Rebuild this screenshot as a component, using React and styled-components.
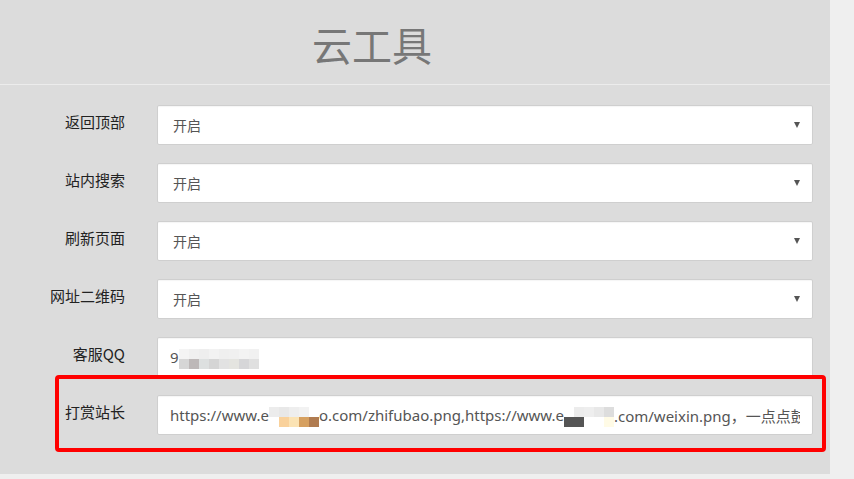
import React from "react";
import styled, { createGlobalStyle } from "styled-components";

const Global = createGlobalStyle`
  html, body {
    margin: 0;
    padding: 0;
    background: #efefef;
    font-family: "Noto Sans", "Noto Sans CJK SC", sans-serif;
  }
`;

const rows = [
  { label: "返回顶部", value: "开启" },
  { label: "站内搜索", value: "开启" },
  { label: "刷新页面", value: "开启" },
  { label: "网址二维码", value: "开启" },
];

const qqBlur = [
  ["#f4f4f4", "#f0f0f0", "#eeeeee", "#f2f2f2", "#efefef", "#f0f0f0", "#f3f3f3", "#f1f1f1"],
  ["#d6d6d6", "#bdb8b8", "#dde0e0", "#d5d5d5", "#e2e2e2", "#e4e4e0", "#d6d6d8", "#e0e0e0"],
];

const payBlur1 = [
  ["#ececec", "#e8e8e8", "#eeeeee", "#f2f2f2", "#ffffff"],
  ["#ffffff", "#f9d19b", "#fbe3b4", "#d6a060", "#b07b50"],
];

const payBlur2 = [
  ["#ffffff", "#ececec", "#eeeeee", "#e8e8e8", "#dddddd"],
  ["#555555", "#555555", "#ffffff", "#ffffff", "#fffbe6"],
];

const Blur = ({ cells }) => (
  <BlurBox>
    {cells.map((row, i) => (
      <BlurRow key={i}>
        {row.map((c, j) => (
          <BlurCell key={j} $color={c} />
        ))}
      </BlurRow>
    ))}
  </BlurBox>
);

const App = () => {
  return (
    <>
      <Global />
      <Panel>
        <Header>
          <Title>云工具</Title>
        </Header>
        <Form>
          {rows.map((r) => (
            <Row key={r.label}>
              <Label>{r.label}</Label>
              <Control>
                <span>{r.value}</span>
                <Caret />
              </Control>
            </Row>
          ))}
          <Row>
            <Label>客服QQ</Label>
            <Control $text>
              <Text>
                9
                <Blur cells={qqBlur} />
              </Text>
            </Control>
          </Row>
          <Row>
            <Label>打赏站长</Label>
            <Control $text>
              <Text>
                https://www.e
                <Blur cells={payBlur1} />
                o.com/zhifubao.png,https://www.e
                <Blur cells={payBlur2} />
                .com/weixin.png，一点点鼓励，都是对我莫大的支持
              </Text>
            </Control>
            <Highlight />
          </Row>
        </Form>
      </Panel>
    </>
  );
};

export default App;

const Panel = styled.div`
  width: 830px;
  background-color: #dcdcdc;
`;

const Header = styled.div`
  height: 85px;
  border-bottom: 1px solid #ececec;
  display: flex;
  align-items: center;
  padding: 4px 0 0 312px;
  box-sizing: border-box;
`;

const Title = styled.h1`
  margin: 0;
  font-size: 40px;
  font-weight: 400;
  color: #777;
  font-family: "Noto Sans CJK SC", sans-serif;
`;

const Form = styled.div`
  display: flex;
  flex-direction: column;
  gap: 18px;
  padding: 20px 17px 39px 0;
`;

const Row = styled.div`
  position: relative;
  display: grid;
  grid-template-columns: 125px 656px;
  column-gap: 32px;
  align-items: start;
`;

const Label = styled.div`
  text-align: right;
  font-size: 15px;
  color: #222;
  padding-top: 5px;
  line-height: 24px;
  font-family: "Noto Sans CJK SC", sans-serif;
`;

const Control = styled.div`
  height: 40px;
  box-sizing: border-box;
  background: #fff;
  border: 1px solid #cfcfcf;
  border-radius: 2px;
  box-shadow: inset 0 1px 1px rgba(0, 0, 0, 0.04);
  display: flex;
  align-items: center;
  justify-content: ${(p) => (p.$text ? "flex-start" : "space-between")};
  padding: 0 12px 0 ${(p) => (p.$text ? "12px" : "15px")};
  font-size: 14px;
  color: #555;
  overflow: hidden;
  font-family: "Noto Sans CJK SC", sans-serif;
`;

const Caret = styled.i`
  width: 0;
  height: 0;
  border-left: 3.5px solid transparent;
  border-right: 3.5px solid transparent;
  border-top: 6px solid #555;
`;

const Text = styled.div`
  white-space: nowrap;
  overflow: hidden;
  font-size: 15px;
  color: #555;
  display: flex;
  align-items: center;
  font-family: "Noto Sans", "Noto Sans CJK SC", sans-serif;
`;

const BlurBox = styled.span`
  display: inline-flex;
  flex-direction: column;
  flex-shrink: 0;
  margin-top: 4px;
`;

const BlurRow = styled.span`
  display: flex;
`;

const BlurCell = styled.span`
  width: 10px;
  height: 10px;
  background: ${(p) => p.$color};
`;

const Highlight = styled.div`
  position: absolute;
  left: 55px;
  top: -20px;
  width: 771px;
  height: 77px;
  box-sizing: border-box;
  border: 4px solid #ff0000;
  border-radius: 4px;
  pointer-events: none;
`;
